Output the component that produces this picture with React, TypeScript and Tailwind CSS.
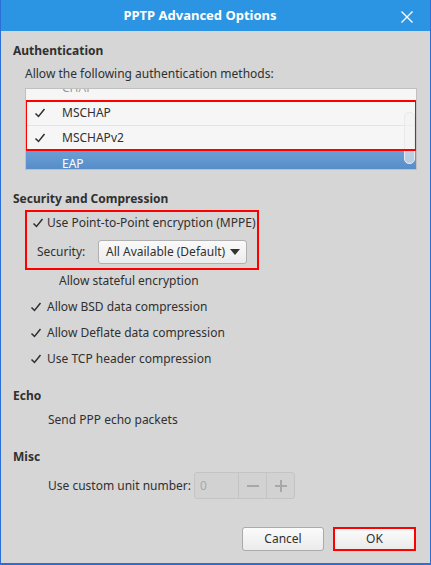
const font = { fontFamily: '"Noto Sans", "Open Sans", sans-serif' };

function Tick() {
  return (
    <svg width="12" height="12" viewBox="0 0 12 12" className="shrink-0">
      <path d="M1.5 6.5 L4.5 9.5 L10.5 2" fill="none" stroke="#2e2e2e" strokeWidth="1.5" />
    </svg>
  );
}

function CheckRow({ label, checked }: { label: string; checked?: boolean }) {
  return (
    <div className="flex h-[26px] items-center whitespace-nowrap">
      <div className="flex w-[22px] justify-center">{checked && <Tick />}</div>
      <span>{label}</span>
    </div>
  );
}

function ListRow({ label, checked }: { label: string; checked?: boolean }) {
  return (
    <div className="flex h-[25px] items-center border-b border-[#e4e4e4]">
      <div className="flex w-[27px] justify-center pl-[1px]">{checked && <Tick />}</div>
      <span className="ml-[9px]">{label}</span>
    </div>
  );
}

export default function App() {
  return (
    <div
      style={font}
      className="flex h-[565px] w-[431px] flex-col border-x border-b-2 border-[#2a6ed6] bg-[#d6d6d6] text-[12px] text-[#303030]"
    >
      <header className="relative flex h-[31px] shrink-0 items-center justify-center bg-[#2b95e3] pr-[31px] text-[13px] font-bold text-white">
        PPTP Advanced Options
        <svg width="12" height="12" viewBox="0 0 12 12" className="absolute right-[17px] top-[11px]">
          <path d="M0.5 0.5 L11.5 11.5 M11.5 0.5 L0.5 11.5" stroke="#fff" strokeWidth="1.4" fill="none" />
        </svg>
      </header>

      <div className="flex flex-1 flex-col px-[12px] pt-[10px]">
        <h2 className="font-bold leading-[20px]">Authentication</h2>
        <p className="mt-[3px] pl-[12px] leading-[20px]">Allow the following authentication methods:</p>

        <div className="relative ml-[12px] mt-[4px] h-[82px] w-[392px] overflow-hidden border border-[#c0c0c0] bg-[#f6f6f6]">
          <div className="-mt-[13px]">
            <div className="flex h-[25px] items-center border-b border-[#e4e4e4] pl-[36px] text-[#9a9a9a]">CHAP</div>
            <ListRow label="MSCHAP" checked />
            <ListRow label="MSCHAPv2" checked />
            <div className="flex h-[26px] items-center bg-gradient-to-b from-[#6a9fd6] to-[#4f86c2] pl-[36px] text-white">
              EAP
            </div>
          </div>
          <div className="absolute right-[1px] top-[23px] h-[52px] w-[11px] rounded-[5px] border border-[#e9e9e9] bg-[#f4f4f4]/60" />
          <div className="absolute left-[-1px] top-[11px] h-[51px] w-[392px] border-2 border-[#ff0000]" />
        </div>

        <h2 className="mt-[19px] font-bold leading-[20px]">Security and Compression</h2>

        <div className="ml-[12px] mt-[1px] w-[234px] whitespace-nowrap border-2 border-[#ff0000] pb-[4px]">
          <div className="flex h-[22px] items-center">
            <div className="flex w-[20px] justify-center pl-[2px]"><Tick /></div>
            <span>Use Point-to-Point encryption (MPPE)</span>
          </div>
          <div className="mt-[6px] flex items-center">
            <span className="w-[71px] pl-[10px]">Security:</span>
            <div className="flex h-[24px] w-[149px] items-center justify-between rounded-[3px] border border-[#b0b0b0] bg-gradient-to-b from-[#fafafa] to-[#ececec] pl-[7px] pr-[6px]">
              <span>All Available (Default)</span>
              <svg width="10" height="6" viewBox="0 0 10 6">
                <path d="M0 0 L10 0 L5 6 Z" fill="#333" />
              </svg>
            </div>
          </div>
        </div>

        <div className="ml-[12px] mt-[-2px]">
          <div className="flex h-[26px] items-center pl-[34px]">Allow stateful encryption</div>
          <CheckRow label="Allow BSD data compression" checked />
          <CheckRow label="Allow Deflate data compression" checked />
          <CheckRow label="Use TCP header compression" checked />
        </div>

        <h2 className="mt-[14px] font-bold leading-[20px]">Echo</h2>
        <div className="flex h-[28px] items-center pl-[35px]">Send PPP echo packets</div>

        <h2 className="mt-[13px] font-bold leading-[20px]">Misc</h2>
        <div className="mt-[5px] flex items-center whitespace-nowrap pl-[35px]">
          <span className="mr-[3px]">Use custom unit number:</span>
          <div className="flex h-[27px] w-[101px] overflow-hidden rounded-[3px] border border-[#c4c4c4] bg-[#d2d2d2] text-[#a8a8a8]">
            <div className="flex flex-1 items-center pl-[5px]">0</div>
            <div className="flex w-[28px] items-center justify-center border-l border-[#c4c4c4]">
              <svg width="12" height="2"><rect width="12" height="2" fill="#a8a8a8" /></svg>
            </div>
            <div className="flex w-[28px] items-center justify-center border-l border-[#c4c4c4]">
              <svg width="12" height="12"><rect x="5" width="2" height="12" fill="#a8a8a8" /><rect y="5" width="12" height="2" fill="#a8a8a8" /></svg>
            </div>
          </div>
        </div>

        <div className="mt-auto mb-[12px] flex justify-end gap-[9px] pr-[2px]">
          <button className="flex h-[24px] w-[82px] items-center justify-center rounded-[3px] border border-[#aaaaaa] bg-gradient-to-b from-[#fbfbfb] to-[#ebebeb]">
            Cancel
          </button>
          <button className="flex h-[24px] w-[83px] items-center justify-center border-2 border-[#ff0000] bg-gradient-to-b from-[#fbfbfb] to-[#ebebeb]">
            OK
          </button>
        </div>
      </div>
    </div>
  );
}
